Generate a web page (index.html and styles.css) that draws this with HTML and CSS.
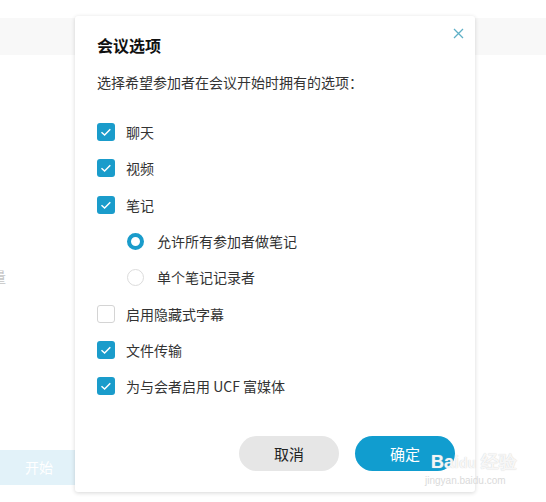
FILE: index.html
```html
<!DOCTYPE html>
<html lang="zh">
<head>
<meta charset="utf-8">
<link rel="stylesheet" href="styles.css">
</head>
<body>
<div class="page">
  <div class="band"></div>
  <div class="side-text">量</div>
  <div class="start-btn">开始</div>

  <div class="dialog">
    <button class="close" aria-label="关闭">
      <svg width="11" height="11" viewBox="0 0 11 11"><path d="M1 1 L10 10 M10 1 L1 10" stroke="#5fb0c6" stroke-width="1.3" fill="none"/></svg>
    </button>
    <h1 class="title">会议选项</h1>
    <p class="subtitle">选择希望参加者在会议开始时拥有的选项：</p>

    <div class="options">
      <div class="row"><span class="cb on"><svg viewBox="0 0 18 18"><path d="M4.5 9.2 L7.6 12 L13.3 6.3" stroke="#fff" stroke-width="1.5" fill="none"/></svg></span><span class="label">聊天</span></div>
      <div class="row"><span class="cb on"><svg viewBox="0 0 18 18"><path d="M4.5 9.2 L7.6 12 L13.3 6.3" stroke="#fff" stroke-width="1.5" fill="none"/></svg></span><span class="label">视频</span></div>
      <div class="row"><span class="cb on"><svg viewBox="0 0 18 18"><path d="M4.5 9.2 L7.6 12 L13.3 6.3" stroke="#fff" stroke-width="1.5" fill="none"/></svg></span><span class="label">笔记</span></div>
      <div class="row sub"><span class="radio on"></span><span class="label">允许所有参加者做笔记</span></div>
      <div class="row sub"><span class="radio"></span><span class="label">单个笔记记录者</span></div>
      <div class="row"><span class="cb"></span><span class="label">启用隐藏式字幕</span></div>
      <div class="row"><span class="cb on"><svg viewBox="0 0 18 18"><path d="M4.5 9.2 L7.6 12 L13.3 6.3" stroke="#fff" stroke-width="1.5" fill="none"/></svg></span><span class="label">文件传输</span></div>
      <div class="row"><span class="cb on"><svg viewBox="0 0 18 18"><path d="M4.5 9.2 L7.6 12 L13.3 6.3" stroke="#fff" stroke-width="1.5" fill="none"/></svg></span><span class="label">为与会者启用 UCF 富媒体</span></div>
    </div>

    <div class="footer">
      <button class="btn cancel">取消</button>
      <button class="btn ok">确定</button>
    </div>
  </div>

  <div class="watermark">
    <div class="wm-top">Bai<span class="wm-du">du</span> 经验</div>
    <div class="wm-url">jingyan.baidu.com</div>
  </div>
</div>
</body>
</html>
```

FILE: styles.css
```css
html, body {
  margin: 0;
  padding: 0;
  background: #fff;
}
body {
  font-family: "Microsoft YaHei", "Noto Sans CJK SC", "Noto Sans", sans-serif;
}
.page {
  position: relative;
  width: 546px;
  height: 502px;
  overflow: hidden;
  background: #fff;
}
.band {
  position: absolute;
  left: 0;
  right: 0;
  top: 18px;
  height: 37px;
  background: #f8f8f8;
}
.side-text {
  position: absolute;
  left: -8px;
  top: 266px;
  font-size: 14px;
  color: #c4c4c4;
}
.start-btn {
  position: absolute;
  left: 0;
  top: 450px;
  width: 82px;
  height: 35px;
  border-radius: 0 4px 4px 0;
  background: #e2f2f9;
  color: #fff;
  font-size: 14px;
  line-height: 35px;
  padding-left: 25px;
  box-sizing: border-box;
}
.dialog {
  position: absolute;
  left: 75px;
  top: 16px;
  width: 400px;
  height: 476px;
  box-sizing: border-box;
  background: #fff;
  border-radius: 3px;
  box-shadow: 0 1px 4px rgba(0,0,0,0.16);
  padding: 17px 20px 0 22px;
}
.close {
  position: absolute;
  right: 11px;
  top: 12px;
  border: 0;
  background: none;
  padding: 0;
  width: 11px;
  height: 11px;
  line-height: 0;
}
.title {
  margin: 0;
  font-size: 16px;
  line-height: 24px;
  font-weight: bold;
  color: #111;
}
.subtitle {
  margin: 15px 0 0;
  font-size: 14px;
  line-height: 20px;
  color: #333;
}
.options {
  margin-top: 22px;
  display: flex;
  flex-direction: column;
}
.row {
  height: 36.3px;
  display: flex;
  align-items: center;
}
.row.sub {
  padding-left: 30px;
}
.cb {
  width: 18px;
  height: 18px;
  box-sizing: border-box;
  border-radius: 3px;
  border: 1px solid #d4d4d4;
  background: #fff;
  display: flex;
  flex-shrink: 0;
}
.cb.on {
  border: 0;
  background: #1a9ccb;
}
.cb svg {
  width: 18px;
  height: 18px;
}
.radio {
  width: 17px;
  height: 17px;
  box-sizing: border-box;
  border-radius: 50%;
  border: 1px solid #dcdcdc;
  flex-shrink: 0;
}
.radio.on {
  border: 4.5px solid #1a9ccb;
}
.label {
  margin-left: 11px;
  font-size: 14px;
  color: #333;
}
.row.sub .label {
  margin-left: 13px;
}
.footer {
  position: absolute;
  right: 20px;
  bottom: 21px;
  display: flex;
  gap: 16px;
}
.btn {
  width: 100px;
  height: 35px;
  border: 0;
  border-radius: 18px;
  font-family: inherit;
  font-size: 15px;
  padding: 0;
}
.cancel {
  background: #e6e6e6;
  color: #222;
}
.ok {
  background: #119dcf;
  color: #fff;
}
.watermark {
  position: absolute;
  left: 431px;
  top: 452px;
  pointer-events: none;
}
.wm-top {
  font-family: "Liberation Sans", sans-serif;
  font-weight: bold;
  font-size: 18px;
  line-height: 20px;
  color: rgba(255,255,255,0.85);
  text-shadow: 0 0 1px #c8c8c8;
}
.wm-top .wm-du {
  font-size: 14px;
}
.wm-url {
  font-family: "Liberation Sans", sans-serif;
  font-size: 10px;
  color: #dadada;
  margin-top: 2px;
  margin-left: -6px;
}
```
